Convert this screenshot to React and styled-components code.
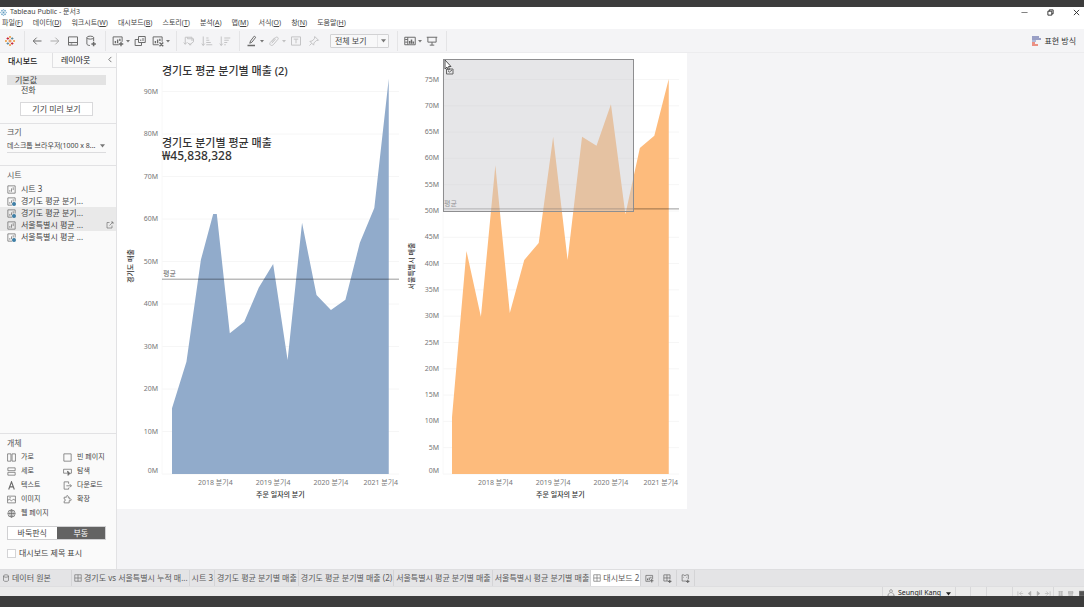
import styled, { createGlobalStyle } from "styled-components";

const GlobalStyle = createGlobalStyle`
    * {
        box-sizing: border-box;
    }

    body {
        margin: 0;
        background: #3c3c3c;
        color: #444;
        font-family: "Noto Sans", "Noto Sans CJK KR", sans-serif;
        font-size: 8px;
        line-height: 10px;
    }

    button, select, input {
        margin: 0;
        padding: 0;
        border: 0;
        background: none;
        color: inherit;
        font: inherit;
    }

    h1, h2, p, ul {
        margin: 0;
        padding: 0;
        font-weight: inherit;
        font-size: inherit;
    }

    ul {
        list-style: none;
    }

    a {
        color: inherit;
        text-decoration: none;
    }
`

const Page = styled.div`
    display: flex;
    flex-direction: column;
    height: 100vh;
    min-height: 560px;
    padding: 7px 0 11px;
    overflow: hidden;
`

const Window = styled.div`
    flex: 1;
    display: flex;
    flex-direction: column;
    min-height: 0;
    background: #f4f4f6;
    white-space: nowrap;
`

const TitleBar = styled.header`
    display: flex;
    align-items: center;
    gap: 3px;
    height: 10px;
    background: #fff;
    font-size: 7px;
    overflow: hidden;
`

const WindowButtons = styled.div`
    display: flex;
    gap: 16px;
    margin-left: auto;
    padding-right: 3px;
`

const PlainButton = styled.button`
    display: flex;
    align-items: center;
    justify-content: center;
    width: 10px;
    height: 10px;
`

const MenuBar = styled.nav`
    display: flex;
    gap: 10px;
    height: 12px;
    padding: 1px 2px;
    background: #fff;
    font-size: 7px;
`

const Toolbar = styled.div`
    display: flex;
    align-items: center;
    height: 24px;
    padding-right: 8px;
    border-bottom: 1px solid #ececee;
`

const ToolGroup = styled.div`
    display: flex;
    align-items: center;
    gap: 2px;
    height: 20px;
    padding: 0 6px 0 ${props => props.$first ? 2 : 4}px;
    border-right: 1px solid #e4e4e6;
`

const ToolButton = styled.button`
    display: flex;
    align-items: center;
    justify-content: center;
    width: 16px;
    height: 16px;
    opacity: ${props => props.$off ? 0.35 : 1};
`

const CaretButton = styled.button`
    display: flex;
    align-items: center;
    width: 4px;
    height: 16px;
    margin-left: -2px;
    opacity: ${props => props.$off ? 0.4 : 1};
`

const SelectBox = styled.label`
    display: grid;
    grid-template-columns: 1fr 11px;
    align-items: center;
    width: 59px;
    height: 14px;
    margin: 0 2px 0 6px;
    border: 1px solid #d2d2d4;
    border-radius: 1px;
    background: #f8f8f9;
`

const Select = styled.select`
    appearance: none;
    width: 100%;
    padding-left: 4px;
    outline: 0;
    text-overflow: ellipsis;
`

const CaretCell = styled.span`
    display: flex;
    align-items: center;
    justify-content: center;
    height: 12px;
    border-left: 1px solid #e6e6e8;
`

const ShowMe = styled.button`
    display: flex;
    align-items: center;
    gap: 3px;
    margin-left: auto;
    color: #333;
`

const Body = styled.div`
    flex: 1;
    display: flex;
    min-height: 0;
`

const Sidebar = styled.aside`
    display: flex;
    flex-direction: column;
    flex: none;
    width: 117px;
    border-right: 1px solid #e2e2e4;
    background: #fafafa;
`

const SideTabs = styled.div`
    display: flex;
    height: 15px;
`

const SideTab = styled.button`
    flex: ${props => props.$active ? "0 0 53px" : "1"};
    padding: 0 8px;
    text-align: left;
    font-weight: ${props => props.$active ? 500 : 400};
    color: #222;
    border: 0 solid #e0e0e2;
    border-width: ${props => props.$active ? "0 1px 0 0" : "0 0 1px"};
`

const Collapse = styled.button`
    width: 12px;
    border-bottom: 1px solid #e0e0e2;
`

const Section = styled.section`
    padding: ${props => props.$top || 4}px 10px ${props => props.$bottom || 0}px 7px;
    border-top: ${props => props.$line ? "1px solid #e2e2e4" : "0"};
`

const SectionTitle = styled.h2`
    line-height: 10px;
    color: #555;
`

const Device = styled.button`
    display: block;
    width: 100%;
    height: 10px;
    padding-left: ${props => props.$active ? 8 : 14}px;
    text-align: left;
    background: ${props => props.$active ? "#e3e3e3" : "transparent"};
`

const PreviewButton = styled.button`
    display: block;
    width: 73px;
    height: 14px;
    margin: 7px auto 0;
    border: 1px solid #d9d9db;
    background: #fff;
`

const SizeBox = styled.label`
    display: grid;
    grid-template-columns: 1fr 6px;
    align-items: center;
    height: 14px;
    margin-top: 2px;
    border-bottom: 1px solid #dcdcde;
    font-size: 7px;

    select {
        padding: 0;
    }
`

const SheetList = styled.ul`
    margin: 3px -10px 0 -7px;
`

const SheetRow = styled.li`
    display: flex;
    align-items: center;
    gap: 5px;
    height: 12px;
    padding: 0 2px 0 7px;
    background: ${props => props.$active ? "#e9e9e9" : "transparent"};

    svg:last-child:not(:first-child) {
        margin-left: auto;
    }
`

const Objects = styled.ul`
    display: grid;
    grid-template-columns: 56px 1fr;
    margin-top: 2px;
    font-size: 7px;
`

const ObjectItem = styled.li`
    display: flex;
    align-items: center;
    gap: 5px;
    height: 14px;
`

const Toggle = styled.div`
    display: grid;
    grid-template-columns: 1fr 1fr;
    margin-top: 6px;
    border: 1px solid #d0d0d2;
`

const ToggleButton = styled.button`
    height: 12px;
    color: ${props => props.$active ? "#fff" : "#444"};
    background: ${props => props.$active ? "#636363" : "#fff"};
`

const CheckLabel = styled.label`
    display: flex;
    align-items: center;
    gap: 3px;
    height: 10px;
    margin-top: 8px;
`

const Checkbox = styled.input`
    appearance: none;
    width: 9px;
    height: 9px;
    border: 1px solid #d4d4d6;
    background: #fff;
`

const Spacer = styled.div`
    flex: 1;
`

const Main = styled.main`
    flex: 1;
    min-width: 0;
    overflow: hidden;
`

const Dashboard = styled.div`
    display: grid;
    grid-template-columns: 1fr 1fr;
    max-width: 570px;
    background: #fff;
`

const Sheet = styled.section`
    position: relative;
`

const ChartSvg = styled.svg`
    display: block;
    width: 100%;
    font-size: 7px;
    fill: #777;
`

const SheetTitle = styled.h1`
    position: absolute;
    left: 45px;
    top: 11px;
    font-size: 11px;
    line-height: 14px;
    font-weight: 500;
    color: #333;
`

const FloatingText = styled.div`
    position: absolute;
    left: 45px;
    top: 83px;
    font-size: 11px;
    line-height: 13px;
    font-weight: 500;
    color: #333;
`

const Amount = styled.p`
    font-size: 12px;
`

const DropArea = styled.div`
    position: absolute;
    left: 41px;
    top: 6px;
    width: 191px;
    height: 153px;
    border: 1px solid #8e8e90;
    background: rgba(202, 202, 206, 0.47);

    svg {
        display: block;
    }
`

const TabBar = styled.nav`
    display: flex;
    flex: none;
    height: 17px;
    border-top: 1px solid #dedee0;
    background: #e4e4e6;
`

const BookTab = styled.button`
    display: flex;
    align-items: center;
    gap: 2px;
    min-width: ${props => props.$min || 0}px;
    padding: 0 1px 0 2px;
    border-right: 1px solid #d4d4d6;
    color: #5a5a5a;
    background: ${props => props.$active ? "#fff" : "transparent"};
`

const NewTab = styled.button`
    display: flex;
    align-items: center;
    justify-content: center;
    width: 18px;
    border-right: 1px solid #d4d4d6;
`

const StatusBar = styled.footer`
    display: flex;
    justify-content: flex-end;
    flex: none;
    height: 10px;
    border-top: 1px solid #dedee0;
    background: #ebebeb;
    font-size: 7px;
    overflow: hidden;
`

const StatusCell = styled.div`
    display: flex;
    align-items: center;
    gap: ${props => props.$gap || 0}px;
    width: ${props => props.$width}px;
    height: 12px;
    padding-left: 4px;
    border-left: 1px solid #d8d8da;
    flex: none;
`

const UserButton = styled.button`
    display: flex;
    align-items: center;
    gap: 3px;
    width: 100%;
    color: #222;

    svg:last-child {
        margin-left: auto;
        margin-right: 4px;
    }
`

const icons = {
    back: <path d="M14 8H3M7.500 3.500L3 8l4.500 4.500" />,
    forward: <path d="M2 8h11M8.500 3.500L13 8l-4.500 4.500" />,
    save: <><path d="M2 2.500h12v11H2zM2 10h12" /><path d="M5 12h2" /></>,
    source: <><ellipse cx="7" cy="3.500" rx="4.500" ry="2" /><path d="M2.500 3.500v8.500c0 1 2 2 4 2M11.500 3.500V8" /><path d="M8.500 12h6M11.500 9v6" strokeWidth="2" /></>,
    addSheet: <><path d="M9 13H1.500V2.500h12V9" /><path d="M4.500 11V8M7.500 11V6M10.500 8V5M9 12h6M12 9v6" strokeWidth="1.800" /></>,
    duplicate: <><path d="M6 2h9v8H6z" /><path d="M6 6H1.500v8h8.500v-4M9 8V6M12 8V4" /></>,
    clear: <><path d="M9 13H1.500V2.500h12V9" /><path d="M4.500 11V8M7.500 11V6M10.500 8V5M10 10l5 5M15 10l-5 5" strokeWidth="1.800" /></>,
    swap: <path d="M3 12V3h9v5M1 10l2 2.500L5 10M6 3v2h8v4l-5 4-3-3M11 13h-2v-2" />,
    sortAsc: <path d="M3 2v12M1 11.500L3 14l2-2.500M7 4h3M7 7h4M7 10h6M7 13h8" />,
    sortDesc: <path d="M3 2v12M1 11.500L3 14l2-2.500M7 4h8M7 7h6M7 10h4M7 13h2" />,
    pen: <><path d="M5 11l1-3 5-6.500 2 1.500-5 6.500z" /><path d="M2 14h10" strokeWidth="2" /></>,
    clip: <path d="M5 9l5-5.500c2-2 5 .5 3 2.500l-6 7c-2.500 2.500-6-.5-4-3l6-6.500M5 11l5-5.500" />,
    text: <path d="M2 2.500h12v11H2zM5 5.500h6M8 5.500V11" />,
    pin: <path d="M9 2l5 5-3 .5-3 3-.5 3-5-5 3-.5 3-3zM5 11l-3 3" />,
    cards: <><path d="M1 3h14v10H1zM5 3v10M1.500 6H5M1.500 9.500H5" /><path d="M7.500 11.500V8M10 11.500V6M12.500 11.500V8.500" strokeWidth="2" /></>,
    present: <path d="M1 3h14M2.500 3v6.500h11V3M8 9.500v4M5 13.500h6" />,
    sheet: <><path d="M1.500 1.500h13v13h-13z" /><path d="M5 12V9M8 12V6M11 9V4" /></>,
    sheetUsed: <><path d="M9 14.500H1.500v-13h13V8M5 12V9M8 11V6M11 8V4" /><circle cx="12.500" cy="12.500" r="3" fill="#3f7fa6" stroke="#3f7fa6" /></>,
    open: <path d="M7 3H2v11h10V9M7 9l7-7M10 2h4v4" />,
    columns: <path d="M1 1.500h6v13H1zM9 1.500h6v13H9z" />,
    rows: <path d="M1.500 1.500h13v5h-13zM1.500 9.500h13v5h-13z" />,
    letter: <path d="M3 15L8 1.500 13 15M5 10.500h6" strokeWidth="2" />,
    image: <path d="M1 2h14v12H1zM1 9l4-1 3 2.500 3-3 4 2M4 5h3" />,
    globe: <><circle cx="8" cy="8" r="6.500" /><ellipse cx="8" cy="8" rx="3" ry="6.500" /><path d="M1.500 8h13M8 1.500v13" /></>,
    blank: <path d="M1.500 1.500h13v13h-13z" />,
    navigate: <><path d="M7 11H1V4h14v7h-2" /><path d="M8 7l5 5-2.500.5L9 15z" fill="currentColor" /></>,
    download: <path d="M10 5V1.500H2v13h8V12M6 8.500h9M12 5.500l3 3-3 3" />,
    extension: <path d="M2 4h4c-1-4 4-4 3 0h2v3c5-1 5 4 0 3v4H2v-3c3 0 3-4 0-4z" />,
    grid: <path d="M1.500 1.500h13v13h-13zM8 1.500v13M1.500 8h13" />,
    cylinder: <><ellipse cx="8" cy="4" rx="5" ry="2.500" /><path d="M3 4v9c2 2.500 8 2.500 10 0V4" /></>,
    newGrid: <><path d="M9 12.500H1.500v-11h11V9M7 1.500v11M1.500 7h11" /><path d="M9 13h6M12 10v6" strokeWidth="2" /></>,
    newStory: <><path d="M9 12.500H2v-11h2.500L7 3l2.500-1.500H13V9M4 6h1M9 6h1" /><path d="M9 13h6M12 10v6" strokeWidth="2" /></>,
    user: <path d="M8 1.500c4 0 3 6 0 6s-4-6 0-6zM5.500 8L2 11v3.500h12V11l-3.500-3" />,
    minimize: <path d="M1 8h14" />,
    restore: <path d="M2 5h9v9H2zM5 5V2h9v9h-3" strokeWidth="2" />,
    close: <path d="M2 2l12 12M14 2L2 14" strokeWidth="2" />,
    left: <path d="M10 2L4 8l6 6" strokeWidth="2" />,
    firstPage: <path d="M2 3v10M11 3L6 8l5 5M6 8h8" />,
    prev: <path d="M11 3L5 8l6 5z" fill="currentColor" />,
    next: <path d="M5 3l6 5-6 5z" fill="currentColor" />,
    lastPage: <path d="M14 3v10M5 3l5 5-5 5M2 8h8" />,
    tiles: <path d="M1 2h14M1 6h14M1 10h14M1 14h14M5 1v14M11 1v14" />,
    strip: <path d="M1 2h14v6H1zM1 4h14M1 6h14M1 11h14M1 14h14" />,
    film: <path d="M1 1h14v14H1z" fill="currentColor" />,
}

const Icon = ({ name, size = 12, color = "#6a6a6a" }) => (
    <svg width={size} height={size} viewBox="0 0 16 16" fill="none" stroke="currentColor" strokeWidth="1.300" color={color} aria-hidden="true">
        {icons[name]}
    </svg>
)

const Caret = ({ size = 4, color = "#777" }) => (
    <svg width={size} height={size} viewBox="0 0 4 4" aria-hidden="true">
        <path d="M0 1h4L2 3.500z" fill={color} />
    </svg>
)

const Logo = ({ size, colors }) => (
    <svg width={size} height={size} viewBox="0 0 16 16" strokeWidth="1.500" aria-hidden="true">
        <path d="M8 5.500v5M5.500 8h5" stroke={colors[0]} />
        <path d="M4.500 2v4M2.500 4h4M11.500 10v4M9.500 12h4" stroke={colors[1]} />
        <path d="M11.500 2v4M9.500 4h4M4.500 10v4M2.500 12h4" stroke={colors[2]} />
        <path d="M8 0v3M6.500 1.500h3M8 13v3M6.500 14.500h3M1.500 6.500v3M0 8h3M14.500 6.500v3M13 8h3" stroke={colors[3]} />
    </svg>
)

const menus = [
    ["파일", "F"], ["데이터", "D"], ["워크시트", "W"], ["대시보드", "B"], ["스토리", "T"],
    ["분석", "A"], ["맵", "M"], ["서식", "O"], ["창", "N"], ["도움말", "H"],
]

const sheets = [
    { name: "시트 3", icon: "sheet" },
    { name: "경기도 평균 분기...", icon: "sheetUsed" },
    { name: "경기도 평균 분기...", icon: "sheetUsed", active: true },
    { name: "서울특별시 평균 ...", icon: "sheet", active: true, open: true },
    { name: "서울특별시 평균 ...", icon: "sheetUsed" },
]

const objects = [
    ["columns", "가로"], ["blank", "빈 페이지"],
    ["rows", "세로"], ["navigate", "탐색"],
    ["letter", "텍스트"], ["download", "다운로드"],
    ["image", "이미지"], ["extension", "확장"],
    ["globe", "웹 페이지"],
]

const bookTabs = [
    { name: "데이터 원본", icon: "cylinder", min: 72 },
    { name: "경기도 vs 서울특별시 누적 매...", icon: "grid" },
    { name: "시트 3" },
    { name: "경기도 평균 분기별 매출" },
    { name: "경기도 평균 분기별 매출 (2)" },
    { name: "서울특별시 평균 분기별 매출" },
    { name: "서울특별시 평균 분기별 매출" },
    { name: "대시보드 2", icon: "grid", active: true },
]

// [quarter index, sales in millions]
const gyeonggi = {
    title: "경기도 매출",
    fill: "#91abcb",
    left: 45,
    right: 282,
    start: 55,
    scale: 4.25,
    step: 10,
    max: 90,
    average: 45.84,
    points: [
        [0, 15.5], [1, 26.4], [2, 50.4], [2.85, 61.2], [3.1, 61.2], [4, 33.1], [5, 35.8], [6, 43.8], [7, 49.4],
        [8, 26.8], [9, 59.1], [10, 42.1], [11, 38.6], [12, 41], [13, 54.4], [14, 62.6], [15, 93],
    ],
}

const seoul = {
    title: "서울특별시 매출",
    fill: "#fdbb7c",
    left: 41,
    right: 277,
    start: 50,
    scale: 5.26,
    step: 5,
    max: 75,
    average: 50.4,
    points: [
        [0, 10.8], [1, 42.4], [2, 29.9], [3, 58.7], [4, 30.6], [5, 40.7], [6, 43.9], [7, 64.1],
        [8, 40.7], [9, 64.1], [10, 62.4], [11, 70.3], [12, 49.4], [13, 62], [14, 64.3], [15, 75.1],
    ],
}

const BASE = 421
const QUARTER = 14.45

const AreaChart = ({ data }) => {
    const y = value => BASE - value * data.scale
    const x = index => data.start + index * QUARTER
    const ticks = Array.from({ length: data.max / data.step + 1 }, (_, i) => i * data.step)
    const line = data.points.map(([i, v]) => `${x(i)},${y(v)}`).join(" ")

    return (
        <ChartSvg viewBox="0 0 285 456" role="img" aria-label={data.title}>
            {ticks.map(tick => (
                <g key={tick}>
                    <line x1={data.left} x2={data.right} y1={y(tick)} y2={y(tick)} stroke="#f6f6f6" />
                    <text x={data.left - 4} y={tick === 0 ? BASE - 1 : y(tick) + 2} textAnchor="end">{tick}M</text>
                </g>
            ))}
            <line x1={data.left} x2={data.left} y1="20" y2={BASE} stroke="#f8f8f8" />
            <polygon points={`${x(0)},${BASE} ${line} ${x(15)},${BASE}`} fill={data.fill} />
            <line x1={data.left} x2={data.right} y1={y(data.average)} y2={y(data.average)} stroke="#000" strokeOpacity="0.4" />
            <text x={data.left + 1} y={y(data.average) - 3} fill="#666">평균</text>
            {[2018, 2019, 2020, 2021].map((year, i) => (
                <text key={year} x={i === 3 ? x(15) - 8 : x(3 + i * 4)} y={BASE + 11} textAnchor="middle">{year} 분기4</text>
            ))}
            <text x={x(7.5)} y={BASE + 23} textAnchor="middle" fill="#333" fontWeight="500">주문 일자의 분기</text>
            <text transform={`translate(${data.left - 29} 213) rotate(-90)`} textAnchor="middle" fill="#333" fontWeight="500">{data.title}</text>
        </ChartSvg>
    )
}

const Tool = ({ name, label, off }) => (
    <ToolButton $off={off} disabled={off} aria-label={label}>
        <Icon name={name} />
    </ToolButton>
)

const App = () => {
    return (
        <>
            <GlobalStyle />
            <Page>
                <Window>
                    <TitleBar>
                        <Logo size={7} colors={["#4f8fb8", "#4f8fb8", "#4f8fb8", "#7fb2d0"]} />
                        <span>Tableau Public - 문서3</span>
                        <WindowButtons>
                            <PlainButton aria-label="최소화"><Icon name="minimize" size={7} color="#222" /></PlainButton>
                            <PlainButton aria-label="이전 크기로"><Icon name="restore" size={7} color="#222" /></PlainButton>
                            <PlainButton aria-label="닫기"><Icon name="close" size={7} color="#222" /></PlainButton>
                        </WindowButtons>
                    </TitleBar>
                    <MenuBar>
                        {menus.map(([name, key]) => (
                            <a href="#menu" key={key}>{name}(<u>{key}</u>)</a>
                        ))}
                    </MenuBar>
                    <Toolbar>
                        <ToolGroup $first>
                            <ToolButton aria-label="시작 페이지">
                                <Logo size={10} colors={["#e8762c", "#c72035", "#5b879b", "#eb9129"]} />
                            </ToolButton>
                        </ToolGroup>
                        <ToolGroup>
                            <Tool name="back" label="실행 취소" />
                            <ToolButton aria-label="다시 실행"><Icon name="forward" color="#aaa" /></ToolButton>
                            <Tool name="save" label="저장" />
                            <Tool name="source" label="새 데이터 원본" />
                        </ToolGroup>
                        <ToolGroup>
                            <Tool name="addSheet" label="새 워크시트" />
                            <CaretButton aria-label="새로 만들기"><Caret /></CaretButton>
                            <Tool name="duplicate" label="복제" />
                            <Tool name="clear" label="지우기" />
                            <CaretButton aria-label="지우기 옵션"><Caret /></CaretButton>
                        </ToolGroup>
                        <ToolGroup>
                            <Tool name="swap" label="행과 열 바꾸기" off />
                            <Tool name="sortAsc" label="오름차순" off />
                            <Tool name="sortDesc" label="내림차순" off />
                        </ToolGroup>
                        <ToolGroup>
                            <Tool name="pen" label="하이라이트" />
                            <CaretButton aria-label="하이라이트 옵션"><Caret /></CaretButton>
                            <Tool name="clip" label="그룹" off />
                            <CaretButton $off aria-label="그룹 옵션"><Caret /></CaretButton>
                            <Tool name="text" label="레이블" off />
                            <Tool name="pin" label="고정" off />
                            <SelectBox>
                                <Select aria-label="맞춤"><option>전체 보기</option></Select>
                                <CaretCell><Caret size={5} /></CaretCell>
                            </SelectBox>
                        </ToolGroup>
                        <ToolGroup>
                            <Tool name="cards" label="카드 표시" />
                            <CaretButton aria-label="카드 옵션"><Caret /></CaretButton>
                            <Tool name="present" label="프레젠테이션" />
                        </ToolGroup>
                        <ShowMe>
                            <svg width="9" height="10" viewBox="0 0 9 10" aria-hidden="true">
                                <path d="M0 1h7M0 3h9" stroke="#7b83b5" strokeWidth="1.500" />
                                <path d="M0 5h4" stroke="#9aa7cf" strokeWidth="1.500" />
                                <path d="M0 7h3M0 9h6" stroke="#e8705f" strokeWidth="1.500" />
                            </svg>
                            표현 방식
                        </ShowMe>
                    </Toolbar>

                    <Body>
                        <Sidebar>
                            <SideTabs>
                                <SideTab $active>대시보드</SideTab>
                                <SideTab>레이아웃</SideTab>
                                <Collapse aria-label="접기"><Icon name="left" size={7} /></Collapse>
                            </SideTabs>
                            <Section $top={7} $bottom={7}>
                                <Device $active>기본값</Device>
                                <Device>전화</Device>
                                <PreviewButton>기기 미리 보기</PreviewButton>
                            </Section>
                            <Section $line $top={3} $bottom={12}>
                                <SectionTitle>크기</SectionTitle>
                                <SizeBox>
                                    <Select aria-label="크기"><option>데스크톱 브라우저(1000 x 8...</option></Select>
                                    <Caret size={5} />
                                </SizeBox>
                            </Section>
                            <Section $line>
                                <SectionTitle>시트</SectionTitle>
                                <SheetList>
                                    {sheets.map((sheet, index) => (
                                        <SheetRow key={index} $active={sheet.active}>
                                            <Icon name={sheet.icon} size={9} />
                                            <span>{sheet.name}</span>
                                            {sheet.open && <Icon name="open" size={8} />}
                                        </SheetRow>
                                    ))}
                                </SheetList>
                            </Section>
                            <Spacer />
                            <Section $line $bottom={11}>
                                <SectionTitle>개체</SectionTitle>
                                <Objects>
                                    {objects.map(([icon, name]) => (
                                        <ObjectItem key={name}>
                                            <Icon name={icon} size={9} />
                                            {name}
                                        </ObjectItem>
                                    ))}
                                </Objects>
                                <Toggle>
                                    <ToggleButton>바둑판식</ToggleButton>
                                    <ToggleButton $active>부동</ToggleButton>
                                </Toggle>
                                <CheckLabel>
                                    <Checkbox type="checkbox" />
                                    대시보드 제목 표시
                                </CheckLabel>
                            </Section>
                        </Sidebar>

                        <Main>
                            <Dashboard>
                                <Sheet>
                                    <AreaChart data={gyeonggi} />
                                    <SheetTitle>경기도 평균 분기별 매출 (2)</SheetTitle>
                                    <FloatingText>
                                        <p>경기도 분기별 평균 매출</p>
                                        <Amount>₩45,838,328</Amount>
                                    </FloatingText>
                                </Sheet>
                                <Sheet>
                                    <AreaChart data={seoul} />
                                    <DropArea>
                                        <svg width="11" height="16" viewBox="0 0 11 16" aria-hidden="true">
                                            <path d="M1 0v9l2-2 1 3 1.500-.5L4.500 6.500H7z" fill="#fff" stroke="#444" strokeWidth="0.900" />
                                            <path d="M2.500 9h6.500v5H2.500zM4 11l1.500 1L8 10" fill="none" stroke="#666" />
                                        </svg>
                                    </DropArea>
                                </Sheet>
                            </Dashboard>
                        </Main>
                    </Body>

                    <TabBar>
                        {bookTabs.map((tab, index) => (
                            <BookTab key={index} $min={tab.min} $active={tab.active}>
                                {tab.icon && <Icon name={tab.icon} size={8} />}
                                {tab.name}
                            </BookTab>
                        ))}
                        <NewTab aria-label="새 워크시트"><Icon name="addSheet" size={9} /></NewTab>
                        <NewTab aria-label="새 대시보드"><Icon name="newGrid" size={9} /></NewTab>
                        <NewTab aria-label="새 스토리"><Icon name="newStory" size={9} /></NewTab>
                    </TabBar>
                    <StatusBar>
                        <StatusCell $width={73}>
                            <UserButton>
                                <Icon name="user" size={8} />
                                Seungil Kang
                                <Caret size={5} color="#222" />
                            </UserButton>
                        </StatusCell>
                        <StatusCell $width={15} />
                        <StatusCell $width={16} />
                        <StatusCell $width={26} />
                        <StatusCell $width={41} $gap={2}>
                            {["firstPage", "prev", "next", "lastPage"].map(name => (
                                <Icon key={name} name={name} size={7} color="#aaa" />
                            ))}
                        </StatusCell>
                        <StatusCell $width={31} $gap={5}>
                            <Icon name="tiles" size={7} color="#999" />
                            <Icon name="strip" size={7} color="#999" />
                            <Icon name="film" size={7} color="#555" />
                        </StatusCell>
                    </StatusBar>
                </Window>
            </Page>
        </>
    );
}

export default App;
